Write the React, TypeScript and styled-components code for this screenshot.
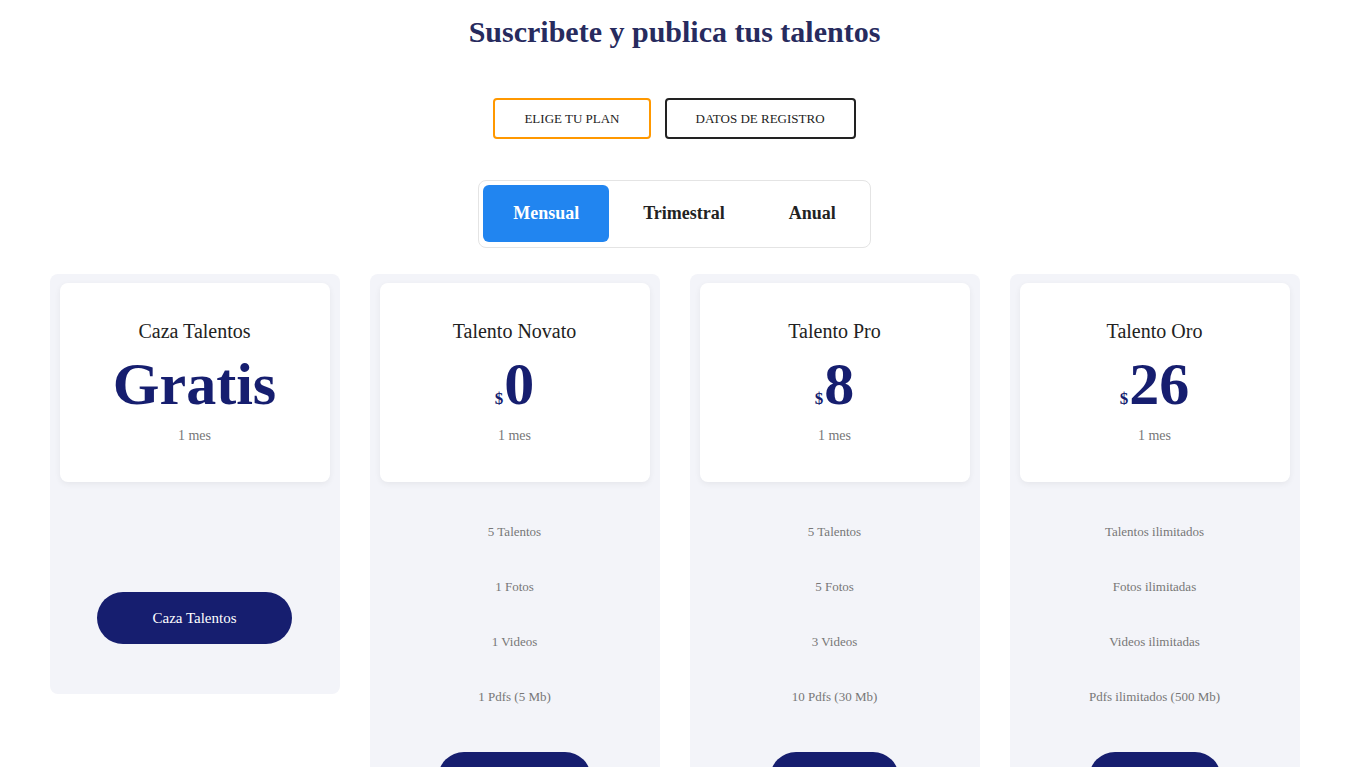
import React from "react";
import styled, { createGlobalStyle } from "styled-components";

const Global = createGlobalStyle`
  html, body { margin: 0; padding: 0; background: #fff; }
  body { font-family: "Liberation Serif", "Times New Roman", serif; color: #222; }
  * { box-sizing: border-box; }
`;

const Page = styled.div`
  display: flex;
  flex-direction: column;
  align-items: center;
  padding-top: 15px;
`;

const Title = styled.h1`
  margin: 0;
  font-size: 30px;
  line-height: 34px;
  font-weight: 700;
  color: #272b5e;
`;

const StepRow = styled.div`
  display: flex;
  gap: 14px;
  margin-top: 49px;
`;

const StepButton = styled.button<{ $active?: boolean }>`
  height: 41px;
  padding: 0 29px;
  background: #fff;
  border: 2px solid ${(p) => (p.$active ? "#ff9800" : "#222")};
  border-radius: 4px;
  font-family: inherit;
  font-size: 13px;
  color: #222;
  text-transform: uppercase;
`;

const Tabs = styled.div`
  display: flex;
  gap: 4px;
  margin-top: 41px;
  padding: 4px 4px 5px;
  border: 1px solid #e4e4e4;
  border-radius: 8px;
`;

const Tab = styled.button<{ $active?: boolean }>`
  height: 57px;
  padding: 0 30px;
  border: none;
  border-radius: 6px;
  background: ${(p) => (p.$active ? "#2185f0" : "transparent")};
  color: ${(p) => (p.$active ? "#fff" : "#222")};
  font-family: inherit;
  font-weight: 700;
  font-size: 18px;
`;

const Plans = styled.div`
  display: grid;
  grid-template-columns: repeat(4, 290px);
  gap: 30px;
  align-items: start;
  margin-top: 26px;
`;

const Plan = styled.div`
  display: flex;
  flex-direction: column;
  align-items: center;
  background: #f3f4f9;
  border-radius: 8px;
  padding: 9px 10px 50px;
`;

const Head = styled.div`
  width: 100%;
  height: 199px;
  background: #fff;
  border-radius: 8px;
  box-shadow: 0 2px 6px rgba(0, 0, 0, 0.06);
  display: flex;
  flex-direction: column;
  align-items: center;
  padding-top: 37px;
`;

const PlanName = styled.div`
  font-size: 20px;
  line-height: 22px;
  color: #222;
`;

const Price = styled.div`
  display: flex;
  align-items: baseline;
  height: 60px;
  margin-top: 12px;
  color: #161e6f;
  font-weight: 700;
  line-height: 60px;
`;

const Currency = styled.span`
  font-size: 17px;
  margin-right: 1px;
`;

const Amount = styled.span`
  font-size: 60px;
`;

const Period = styled.div`
  margin-top: 14px;
  font-size: 14px;
  line-height: 16px;
  color: #777;
`;

const Features = styled.ul<{ $empty?: boolean }>`
  list-style: none;
  margin: 0;
  padding: 22px 0 0;
  width: 100%;
  min-height: ${(p) => (p.$empty ? "82px" : "0")};
`;

const Feature = styled.li`
  height: 55px;
  display: flex;
  align-items: center;
  justify-content: center;
  font-size: 13px;
  color: #777;
`;

const Cta = styled.button<{ $w: number }>`
  margin-top: 28px;
  width: ${(p) => p.$w}px;
  height: 52px;
  border: none;
  border-radius: 26px;
  background: #161e6f;
  color: #fff;
  font-family: inherit;
  font-size: 15px;
`;

type PlanData = {
  name: string;
  price: string;
  currency: boolean;
  features: string[];
  cta: string;
  ctaWidth: number;
};

const plans: PlanData[] = [
  { name: "Caza Talentos", price: "Gratis", currency: false, features: [], cta: "Caza Talentos", ctaWidth: 195 },
  { name: "Talento Novato", price: "0", currency: true, features: ["5 Talentos", "1 Fotos", "1 Videos", "1 Pdfs (5 Mb)"], cta: "Talento Novato", ctaWidth: 153 },
  { name: "Talento Pro", price: "8", currency: true, features: ["5 Talentos", "5 Fotos", "3 Videos", "10 Pdfs (30 Mb)"], cta: "Talento Pro", ctaWidth: 129 },
  { name: "Talento Oro", price: "26", currency: true, features: ["Talentos ilimitados", "Fotos ilimitadas", "Videos ilimitadas", "Pdfs ilimitados (500 Mb)"], cta: "Talento Oro", ctaWidth: 132 },
];

export default function App() {
  return (
    <>
      <Global />
      <Page>
        <Title>Suscribete y publica tus talentos</Title>
        <StepRow>
          <StepButton $active>Elige tu plan</StepButton>
          <StepButton>Datos de registro</StepButton>
        </StepRow>
        <Tabs>
          <Tab $active>Mensual</Tab>
          <Tab>Trimestral</Tab>
          <Tab>Anual</Tab>
        </Tabs>
        <Plans>
          {plans.map((p) => (
            <Plan key={p.name}>
              <Head>
                <PlanName>{p.name}</PlanName>
                <Price>
                  {p.currency && <Currency>$</Currency>}
                  <Amount>{p.price}</Amount>
                </Price>
                <Period>1 mes</Period>
              </Head>
              <Features $empty={p.features.length === 0}>
                {p.features.map((f) => (
                  <Feature key={f}>{f}</Feature>
                ))}
              </Features>
              <Cta $w={p.ctaWidth}>{p.cta}</Cta>
            </Plan>
          ))}
        </Plans>
      </Page>
    </>
  );
}
